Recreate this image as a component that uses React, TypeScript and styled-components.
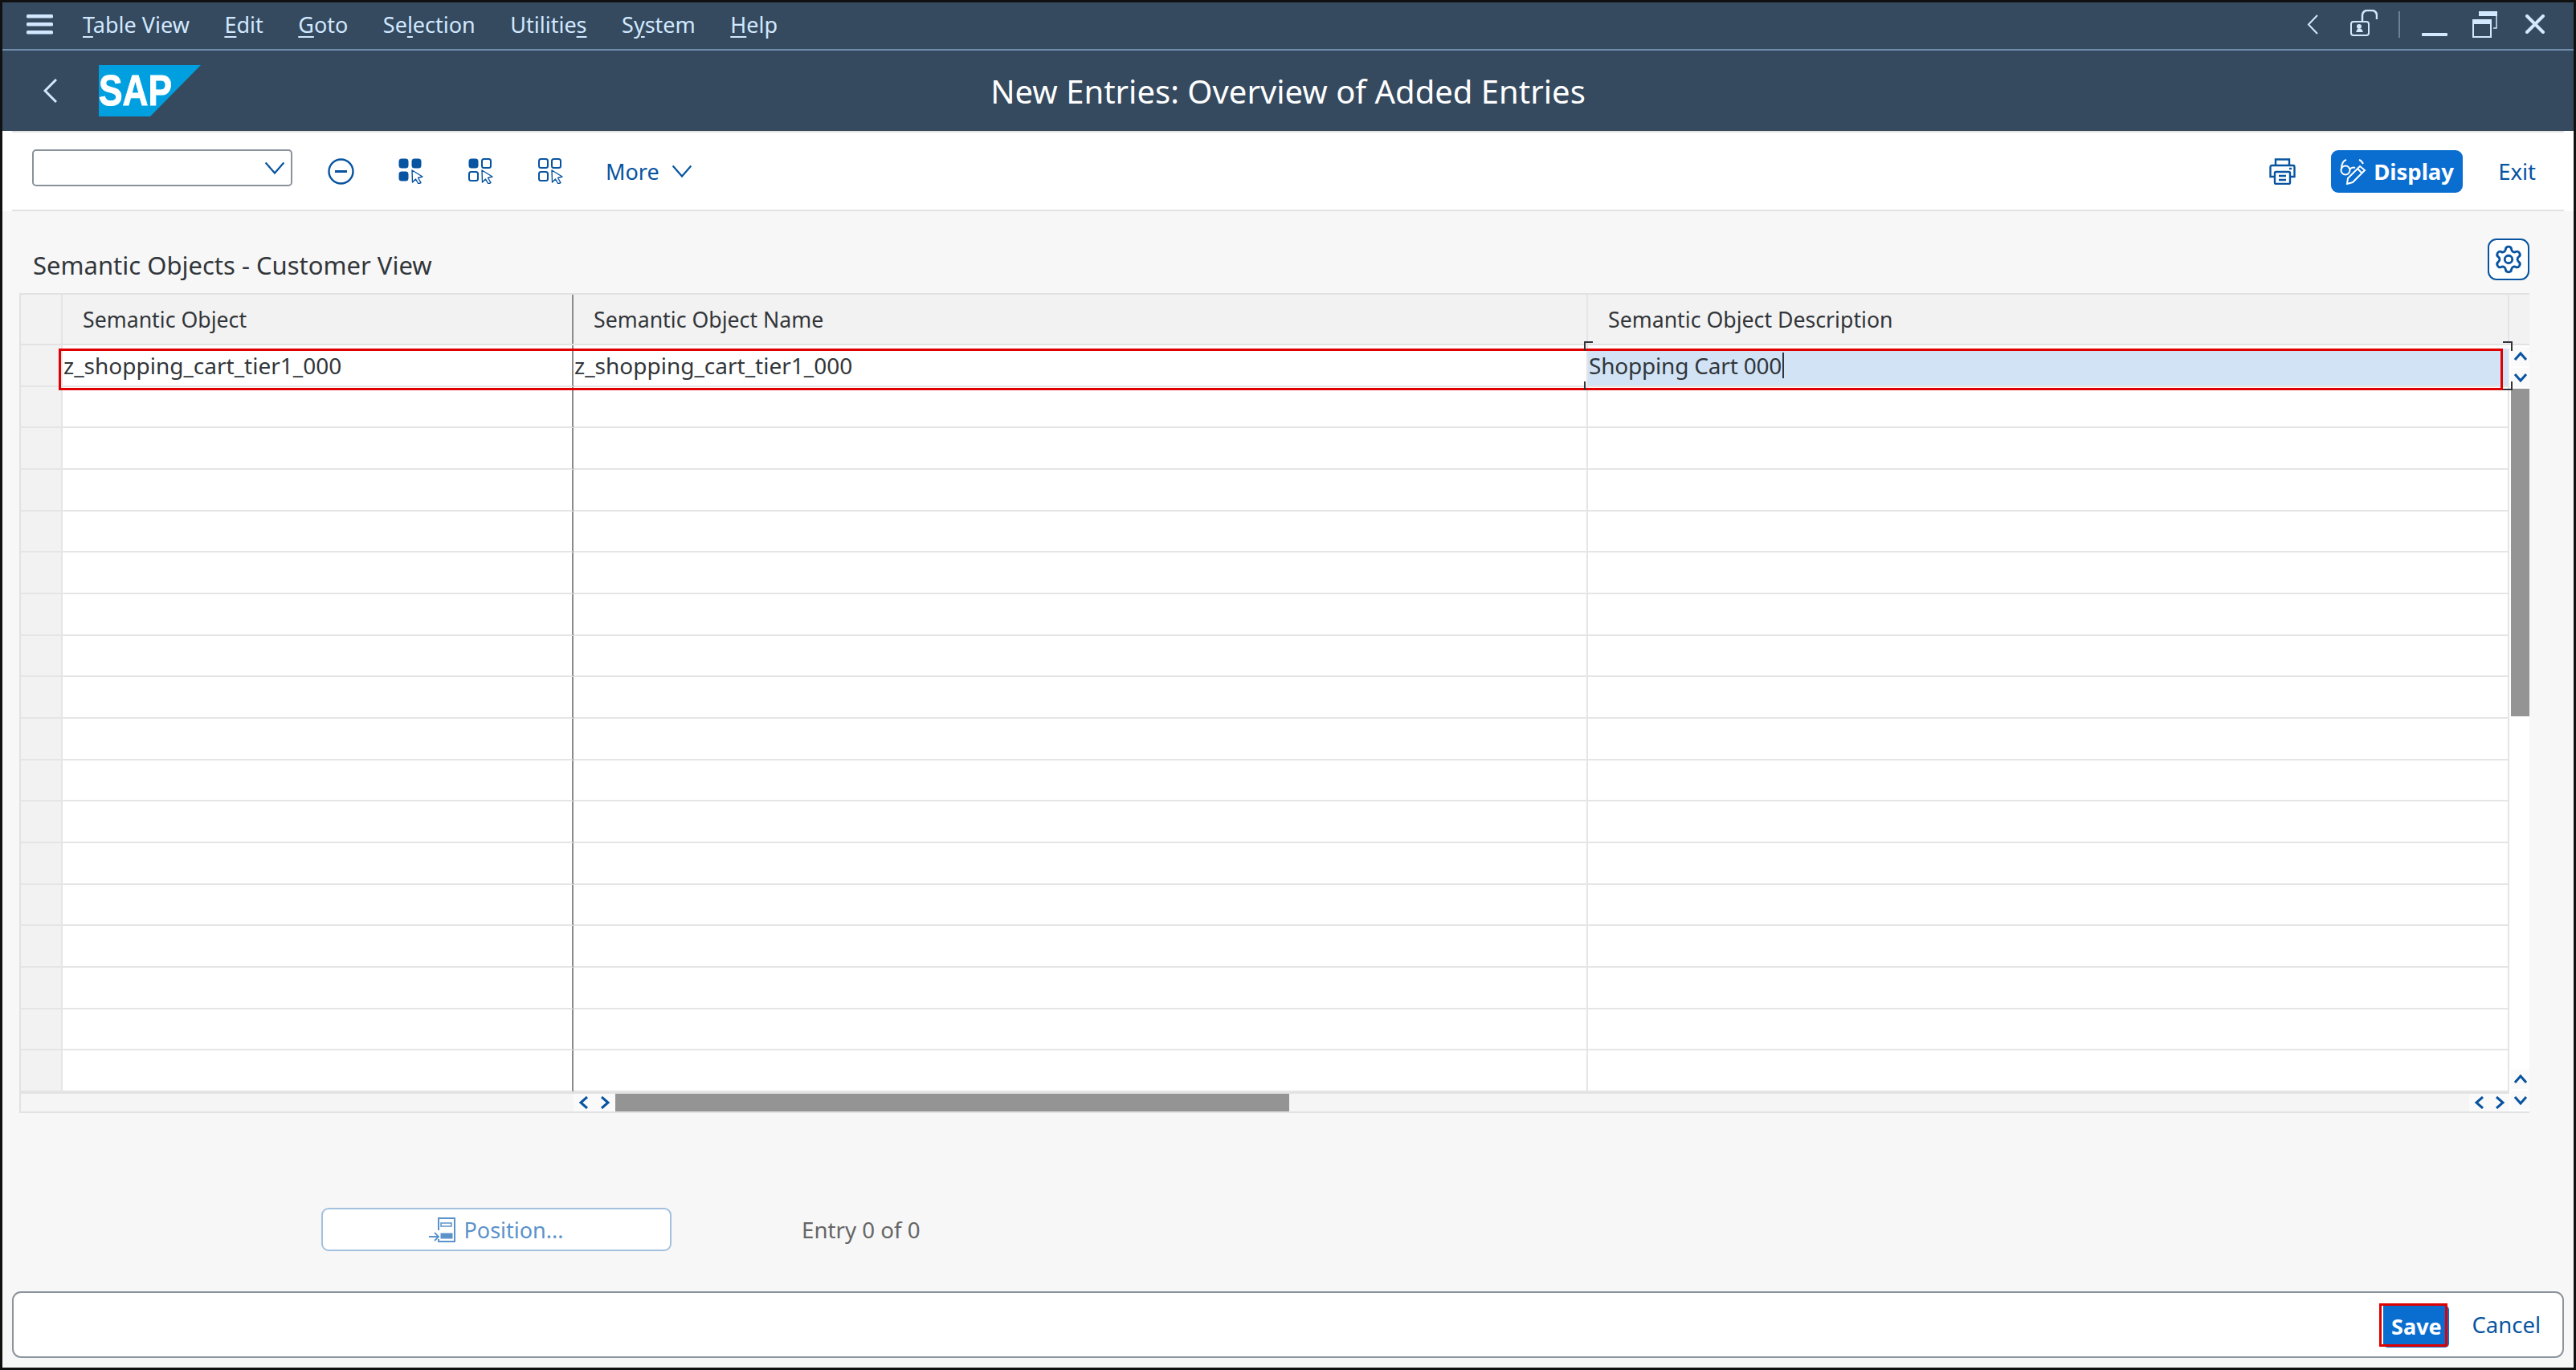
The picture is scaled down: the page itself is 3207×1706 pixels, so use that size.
import styled, { createGlobalStyle } from 'styled-components';
import { Settings } from 'lucide-react';

const GlobalStyle = createGlobalStyle`
  html, body {
    margin: 0;
    padding: 0;
    overflow: hidden;
    background: #000;
  }
  *, *::before, *::after {
    box-sizing: border-box;
  }
`;

const FONT = '"Noto Sans", "Open Sans", Arial, sans-serif';
const ICON_LIGHT = '#d1e8ff';
const ICON_BLUE = '#0854a0';

const Window = styled.div`
  width: 3207px;
  height: 1706px;
  border: 3px solid #111;
  display: flex;
  flex-direction: column;
  font-family: ${FONT};
  color: #32363a;
  background: #f7f7f7;
`;

const MenuBar = styled.div`
  height: 60px;
  flex: none;
  background: #354a5f;
  border-bottom: 2px solid #6f8cad;
  display: flex;
  align-items: center;
  padding: 0 36px 4px 30px;
`;
const MenuList = styled.div`
  display: flex;
  gap: 43.5px;
  margin-left: 37px;
  flex: 1;
`;
const MenuItem = styled.span`
  font-size: 27px;
  color: #d1e8ff;
  white-space: nowrap;
`;
const Mnemonic = styled.span`
  text-decoration: underline;
  text-underline-offset: 4px;
`;
const WindowActions = styled.div`
  display: flex;
  align-items: center;
`;
const ActionSlot = styled.div<{ $after?: number; $lift?: number }>`
  display: flex;
  margin-right: ${(props) => props.$after || 0}px;
  margin-bottom: ${(props) => props.$lift || 0}px;
`;
const ActionDivider = styled.div`
  width: 2px;
  height: 33px;
  background: #6d7f91;
  margin: 0 27px 0 26px;
`;

const TitleBar = styled.div`
  height: 100px;
  flex: none;
  background: #354a5f;
  display: grid;
  grid-template-columns: 1fr auto 1fr;
  align-items: center;
`;
const Brand = styled.div`
  display: flex;
  align-items: center;
  gap: 52px;
  padding-left: 51px;
`;
const PageTitle = styled.h1`
  margin: 0;
  font-size: 40px;
  font-weight: 400;
  color: #fff;
  white-space: nowrap;
`;

const Toolbar = styled.div`
  height: 100px;
  flex: none;
  background: #fff;
  padding: 0 12px;
`;
const ToolbarInner = styled.div`
  height: 100%;
  border-top: 2px solid #e2e2e2;
  border-bottom: 2px solid #e2e2e2;
  display: flex;
  align-items: center;
  justify-content: space-between;
  padding: 0 35px 0 25px;
`;
const ToolGroup = styled.div`
  display: flex;
  align-items: center;
  gap: 55px;
`;
const SelectBox = styled.div`
  width: 324px;
  height: 46px;
  margin: 0 -11px 8px 0;
  border: 2px solid #89919a;
  border-radius: 5px;
  background: #fff;
  display: flex;
  align-items: center;
  justify-content: flex-end;
  padding-right: 7px;
`;
const MoreLink = styled.span`
  display: flex;
  align-items: center;
  gap: 15px;
  font-size: 27px;
  color: ${ICON_BLUE};
  margin-left: -3px;
`;
const PrintSlot = styled.div`
  display: flex;
  margin-right: -11px;
`;
const EmphasizedButton = styled.div`
  width: 164px;
  height: 53px;
  border-radius: 9px;
  background: #0a6ed1;
  color: #fff;
  font-size: 27.5px;
  font-weight: 700;
  display: flex;
  align-items: center;
  gap: 9px;
  padding-left: 11px;
  white-space: nowrap;
`;
const ExitLink = styled.span`
  font-size: 27.5px;
  color: ${ICON_BLUE};
  margin-left: -11px;
`;

const Content = styled.div`
  flex: 1;
  display: flex;
  flex-direction: column;
  padding: 34px 12px 12px;
  min-height: 0;
`;
const SectionHeader = styled.div`
  display: flex;
  justify-content: space-between;
  align-items: flex-start;
  padding: 0 43px 0 26px;
`;
const SectionTitle = styled.h2`
  margin: 0;
  padding-top: 13px;
  font-size: 31px;
  line-height: 40px;
  font-weight: 400;
  color: #32363a;
`;
const GearButton = styled.div`
  width: 52px;
  height: 52px;
  border: 2px solid #0854a0;
  border-radius: 11px;
  background: #fff;
  display: flex;
  align-items: center;
  justify-content: center;
  color: ${ICON_BLUE};
`;

const Table = styled.div`
  width: 3125px;
  height: 1021px;
  margin: 15px 0 0 9px;
  border: 2px solid #e2e2e2;
  display: flex;
  background: #fff;
  flex: none;
`;
const TableMain = styled.div`
  width: 3098px;
  display: flex;
  flex-direction: column;
`;
const HeaderRow = styled.div`
  height: 63px;
  flex: none;
  display: grid;
  grid-template-columns: 52px 636px 1263px 1147px;
  background: #f2f2f2;
  border-bottom: 2px solid #e2e2e2;
`;
const HeaderCell = styled.div<{ $line?: string }>`
  display: flex;
  align-items: center;
  padding-left: 25px;
  font-size: 26.7px;
  color: #32363a;
  white-space: nowrap;
  border-right: 2px solid ${(props) => props.$line || '#e5e5e5'};
`;
const Rows = styled.div`
  position: relative;
  flex: 1;
  display: grid;
  grid-auto-rows: 1fr;
`;
const Row = styled.div`
  display: grid;
  grid-template-columns: 52px 636px 1263px 1147px;
`;
const SelectorCell = styled.div`
  background: #f2f2f2;
  border-right: 2px solid #e5e5e5;
  border-bottom: 2px solid #e5e5e5;
`;
const Cell = styled.div<{ $line?: string; $selected?: boolean }>`
  display: flex;
  align-items: center;
  padding-left: 1px;
  padding-bottom: ${(props) => (props.$selected ? '3px' : '0')};
  font-size: 28px;
  letter-spacing: ${(props) => (props.$selected ? '-0.2px' : '0')};
  color: #32363a;
  white-space: nowrap;
  background: ${(props) => (props.$selected ? '#d1e3f5' : '#fff')};
  margin-top: ${(props) => (props.$selected ? '4px' : '0')};
  border-right: 2px solid ${(props) => props.$line || '#e5e5e5'};
  border-bottom: 2px solid #e5e5e5;
`;
const Caret = styled.span`
  display: inline-block;
  width: 2px;
  height: 32px;
  margin-left: 1px;
  background: #32363a;
`;
const RowHighlight = styled.div`
  position: absolute;
  left: 47px;
  top: 4px;
  width: 3043px;
  height: 52px;
  border: 3px solid #e00000;
  pointer-events: none;
`;
const FocusCorner = styled.div<{ $x: number; $y: number; $w: number; $h: number; $sides: string }>`
  position: absolute;
  left: ${(props) => props.$x}px;
  top: ${(props) => props.$y}px;
  width: ${(props) => props.$w}px;
  height: ${(props) => props.$h}px;
  border-style: solid;
  border-color: #32363a;
  border-width: ${(props) => props.$sides};
`;

const HScrollBar = styled.div`
  height: 24px;
  flex: none;
  display: flex;
  background: #f5f5f5;
  border-top: 2px solid #e2e2e2;
`;
const HScrollLead = styled.div`
  width: 688px;
  flex: none;
`;
const ScrollButton = styled.div<{ $h?: number; $w?: number }>`
  width: ${(props) => (props.$w ? `${props.$w}px` : '100%')};
  height: ${(props) => (props.$h ? `${props.$h}px` : '100%')};
  flex: none;
  background: #fafafa;
  display: flex;
  align-items: center;
  justify-content: center;
`;
const HTrack = styled.div`
  flex: 1;
`;
const HThumb = styled.div`
  width: 839px;
  height: 100%;
  background: #949494;
`;
const VScrollBar = styled.div`
  width: 23px;
  margin-left: 2px;
  flex: none;
  display: flex;
  flex-direction: column;
  background: #fff;
`;
const VScrollHead = styled.div`
  height: 63px;
  flex: none;
  background: #f2f2f2;
  margin-left: -2px;
  border-bottom: 2px solid #e2e2e2;
`;
const VTrack = styled.div`
  flex: 1;
`;
const VThumb = styled.div`
  height: 408px;
  background: #949494;
`;
const VButtonPair = styled.div`
  display: flex;
  flex-direction: column;
  gap: 2px;
  flex: none;
  padding: 2px 0;
`;

const PositionRow = styled.div`
  display: flex;
  align-items: center;
  gap: 162px;
  margin: 118px 0 0 385px;
`;
const PositionButton = styled.div`
  width: 436px;
  height: 54px;
  border: 2px solid #a3c1df;
  border-radius: 9px;
  background: #fff;
  display: flex;
  align-items: center;
  justify-content: center;
  gap: 9px;
  font-size: 27px;
  color: #5b92c9;
`;
const EntryCount = styled.span`
  font-size: 27.7px;
  color: #666;
`;

const StatusBar = styled.div`
  margin-top: auto;
  height: 83px;
  flex: none;
  border: 2px solid #8c949c;
  border-radius: 11px;
  background: #fff;
  display: flex;
  align-items: center;
  justify-content: flex-end;
  gap: 28px;
  padding: 0 27px 0 0;
`;
const SaveButton = styled.div`
  position: relative;
  width: 82px;
  height: 52px;
  margin-top: 4px;
  border-radius: 0 5px 5px 5px;
  background: #0a6ed1;
  color: #fff;
  font-size: 27px;
  font-weight: 700;
  display: flex;
  align-items: center;
  justify-content: center;
  &::after {
    content: '';
    position: absolute;
    left: -5px;
    top: -3px;
    width: 85px;
    height: 54px;
    border: 3px solid #e00000;
  }
`;
const CancelLink = styled.span`
  font-size: 27.5px;
  color: ${ICON_BLUE};
`;

const Chevron = ({ dir, size = 16, width = 3, color = ICON_BLUE }: { dir: 'up' | 'down' | 'left' | 'right'; size?: number; width?: number; color?: string }) => {
  const points = {
    up: '1,12 8,4 15,12',
    down: '1,4 8,12 15,4',
    left: '12,1 4,8 12,15',
    right: '4,1 12,8 4,15'
  }[dir];
  return (
    <svg width={size} height={size} viewBox='0 0 16 16' fill='none'>
      <polyline points={points} stroke={color} strokeWidth={width * (16 / size)} />
    </svg>
  );
};

const Hamburger = () => (
  <svg width='33' height='25' viewBox='0 0 33 25'>
    <rect x='0' y='0' width='33' height='4.5' rx='1.5' fill={ICON_LIGHT} />
    <rect x='0' y='10' width='33' height='4.5' rx='1.5' fill={ICON_LIGHT} />
    <rect x='0' y='20' width='33' height='4.5' rx='1.5' fill={ICON_LIGHT} />
  </svg>
);

const SlimChevron = ({ w, h, sw }: { w: number; h: number; sw: number }) => (
  <svg width={w} height={h} viewBox={`0 0 ${w} ${h}`} fill='none'>
    <polyline points={`${w - 1},1 2,${h / 2} ${w - 1},${h - 1}`} stroke={ICON_LIGHT} strokeWidth={sw} />
  </svg>
);

const LockIcon = () => (
  <svg width='34' height='33' viewBox='0 0 34 33' fill='none'>
    <rect x='1' y='15' width='22' height='17' rx='3' stroke={ICON_LIGHT} strokeWidth='2' />
    <path d='M15 15V7a6 6 0 0 1 6-6h6a6 6 0 0 1 6 6v5' stroke={ICON_LIGHT} strokeWidth='2.5' />
    <circle cx='11' cy='21' r='3' fill={ICON_LIGHT} />
    <path d='M7 28l2-4h5l2 4z' fill={ICON_LIGHT} />
  </svg>
);

const MinimizeIcon = () => (
  <svg width='32' height='33' viewBox='0 0 32 33'>
    <rect x='0' y='29' width='32' height='4' rx='1' fill={ICON_LIGHT} />
  </svg>
);

const RestoreIcon = () => (
  <svg width='31' height='33' viewBox='0 0 31 33' fill='none'>
    <path d='M8 0h23v6H8z' fill={ICON_LIGHT} />
    <path d='M30 6v15h-4' stroke={ICON_LIGHT} strokeWidth='1.5' />
    <rect x='1' y='11' width='22' height='21' stroke={ICON_LIGHT} strokeWidth='2' />
    <rect x='0' y='10' width='24' height='6' fill={ICON_LIGHT} />
  </svg>
);

const CloseIcon = () => (
  <svg width='24' height='24' viewBox='0 0 24 24' fill='none'>
    <path d='M2 2l20 20M22 2L2 22' stroke={ICON_LIGHT} strokeWidth='4' strokeLinecap='round' />
  </svg>
);

const SapLogo = () => (
  <svg width='127' height='64' viewBox='0 0 127 64'>
    <polygon points='0,0 127,0 64,64 0,64' fill='#00a0e0' />
    <text
      x='0'
      y='50'
      fontFamily='"Liberation Sans", Arial, sans-serif'
      fontWeight='700'
      fontSize='53'
      fill='#fff'
      stroke='#fff'
      strokeWidth='1'
      textLength='91'
      lengthAdjust='spacingAndGlyphs'
    >
      SAP
    </text>
  </svg>
);

const MinusCircle = () => (
  <svg width='33' height='33' viewBox='0 0 33 33' fill='none'>
    <circle cx='16.5' cy='16.5' r='15' stroke={ICON_BLUE} strokeWidth='2.4' />
    <rect x='9' y='15' width='15' height='3' fill={ICON_BLUE} />
  </svg>
);

const SelectionIcon = ({ filled }: { filled: boolean[] }) => {
  const tile = (x: number, y: number, on: boolean) => (
    <rect
      x={x}
      y={y}
      width='11'
      height='11'
      rx='2.5'
      fill={on ? ICON_BLUE : 'none'}
      stroke={ICON_BLUE}
      strokeWidth={on ? 1 : 2}
    />
  );
  return (
    <svg width='32' height='32' viewBox='0 0 32 32' fill='none'>
      {tile(1, 1, filled[0])}
      {tile(17, 1, filled[1])}
      {tile(1, 17, filled[2])}
      <path
        d='M17 15l13 8-5.500 1.500 3.500 6-3 1.500-3.500-6-4 4z'
        fill='#fff'
        stroke={ICON_BLUE}
        strokeWidth='1.4'
        strokeLinejoin='round'
      />
    </svg>
  );
};

const PrinterIcon = () => (
  <svg width='33' height='33' viewBox='0 0 33 33' fill='none' stroke={ICON_BLUE} strokeWidth='2.4'>
    <path d='M8 9V1.500h17V9' />
    <path d='M7 23H1.500V11a2 2 0 0 1 2-2h26a2 2 0 0 1 2 2v12H26' />
    <rect x='7' y='17' width='19' height='15' rx='1.500' />
    <path d='M12 22h9M12 27h9' />
    <path d='M25 13h3' />
  </svg>
);

const GlassesPencil = () => (
  <svg width='33' height='33' viewBox='0 0 33 33' fill='none' stroke='#fff' strokeWidth='2'>
    <circle cx='7' cy='15' r='5.500' />
    <path d='M2 14c0-6 2-11 6-12' />
    <path d='M12 14c3-3 5-3 7-2' />
    <path d='M24 2c3 1 4 3 5 5' />
    <path d='M10 25l15-15 6 5-15 15-7 2z' />
    <path d='M22 13l5 5' />
  </svg>
);

const PositionIcon = () => (
  <svg width='34' height='31' viewBox='0 0 34 31' fill='none' stroke='#5b92c9'>
    <path d='M12 16V1h20v29H12v-3' strokeWidth='2' />
    <rect x='15' y='7' width='13' height='4' strokeWidth='1.500' />
    <rect x='15' y='20' width='14' height='6' fill='#5b92c9' strokeWidth='1' />
    <path d='M0 24h12M7 19l5 5-5 5' strokeWidth='1.800' />
  </svg>
);

const EMPTY_ROWS = Array.from({ length: 17 }, (_, i) => i);
const SPLIT_LINE = '#8a8a8a';

const App = () => {
  return (
    <>
      <GlobalStyle />
      <Window>
        <MenuBar>
          <Hamburger />
          <MenuList>
            <MenuItem><Mnemonic>T</Mnemonic>able View</MenuItem>
            <MenuItem><Mnemonic>E</Mnemonic>dit</MenuItem>
            <MenuItem><Mnemonic>G</Mnemonic>oto</MenuItem>
            <MenuItem>Se<Mnemonic>l</Mnemonic>ection</MenuItem>
            <MenuItem>Utilitie<Mnemonic>s</Mnemonic></MenuItem>
            <MenuItem>S<Mnemonic>y</Mnemonic>stem</MenuItem>
            <MenuItem><Mnemonic>H</Mnemonic>elp</MenuItem>
          </MenuList>
          <WindowActions>
            <ActionSlot $after={40}>
              <SlimChevron w={14} h={25} sw={2} />
            </ActionSlot>
            <ActionSlot $lift={4}>
              <LockIcon />
            </ActionSlot>
            <ActionDivider />
            <ActionSlot $after={31} $lift={4}>
              <MinimizeIcon />
            </ActionSlot>
            <ActionSlot $after={35}>
              <RestoreIcon />
            </ActionSlot>
            <CloseIcon />
          </WindowActions>
        </MenuBar>

        <TitleBar>
          <Brand>
            <SlimChevron w={17} h={30} sw={3} />
            <SapLogo />
          </Brand>
          <PageTitle>New Entries: Overview of Added Entries</PageTitle>
          <span />
        </TitleBar>

        <Toolbar>
          <ToolbarInner>
            <ToolGroup>
              <SelectBox>
                <Chevron dir='down' size={26} width={2.2} />
              </SelectBox>
              <MinusCircle />
              <SelectionIcon filled={[true, true, true]} />
              <SelectionIcon filled={[true, false, false]} />
              <SelectionIcon filled={[false, false, false]} />
              <MoreLink>
                More
                <Chevron dir='down' size={26} width={2.2} />
              </MoreLink>
            </ToolGroup>
            <ToolGroup>
              <PrintSlot>
                <PrinterIcon />
              </PrintSlot>
              <EmphasizedButton>
                <GlassesPencil />
                Display
              </EmphasizedButton>
              <ExitLink>Exit</ExitLink>
            </ToolGroup>
          </ToolbarInner>
        </Toolbar>

        <Content>
          <SectionHeader>
            <SectionTitle>Semantic Objects - Customer View</SectionTitle>
            <GearButton>
              <Settings size={38} strokeWidth={1.8} />
            </GearButton>
          </SectionHeader>

          <Table>
            <TableMain>
              <HeaderRow>
                <HeaderCell />
                <HeaderCell $line={SPLIT_LINE}>Semantic Object</HeaderCell>
                <HeaderCell>Semantic Object Name</HeaderCell>
                <HeaderCell>Semantic Object Description</HeaderCell>
              </HeaderRow>
              <Rows>
                <Row>
                  <SelectorCell />
                  <Cell $line={SPLIT_LINE}>z_shopping_cart_tier1_000</Cell>
                  <Cell>z_shopping_cart_tier1_000</Cell>
                  <Cell $selected>
                    Shopping Cart 000
                    <Caret />
                  </Cell>
                </Row>
                {EMPTY_ROWS.map((i) => (
                  <Row key={i}>
                    <SelectorCell />
                    <Cell $line={SPLIT_LINE} />
                    <Cell />
                    <Cell />
                  </Row>
                ))}
                <RowHighlight />
                <FocusCorner $x={1946} $y={-5} $w={11} $h={12} $sides='2px 0 0 2px' />
                <FocusCorner $x={1946} $y={45} $w={2} $h={11} $sides='0 0 0 2px' />
                <FocusCorner $x={3090} $y={-5} $w={12} $h={12} $sides='2px 2px 0 0' />
                <FocusCorner $x={3090} $y={45} $w={12} $h={11} $sides='0 2px 2px 0' />
              </Rows>
              <HScrollBar>
                <HScrollLead />
                <ScrollButton $w={26}>
                  <Chevron dir='left' size={16} />
                </ScrollButton>
                <ScrollButton $w={26}>
                  <Chevron dir='right' size={16} />
                </ScrollButton>
                <HTrack>
                  <HThumb />
                </HTrack>
                <ScrollButton $w={25}>
                  <Chevron dir='left' size={16} />
                </ScrollButton>
                <ScrollButton $w={25}>
                  <Chevron dir='right' size={16} />
                </ScrollButton>
              </HScrollBar>
            </TableMain>
            <VScrollBar>
              <VScrollHead />
              <VButtonPair>
                <ScrollButton $h={24}>
                  <Chevron dir='up' size={16} />
                </ScrollButton>
                <ScrollButton $h={24}>
                  <Chevron dir='down' size={16} />
                </ScrollButton>
              </VButtonPair>
              <VTrack>
                <VThumb />
              </VTrack>
              <VButtonPair>
                <ScrollButton $h={24}>
                  <Chevron dir='up' size={16} />
                </ScrollButton>
                <ScrollButton $h={24}>
                  <Chevron dir='down' size={16} />
                </ScrollButton>
              </VButtonPair>
            </VScrollBar>
          </Table>

          <PositionRow>
            <PositionButton>
              <PositionIcon />
              Position...
            </PositionButton>
            <EntryCount>Entry 0 of 0</EntryCount>
          </PositionRow>

          <StatusBar>
            <SaveButton>Save</SaveButton>
            <CancelLink>Cancel</CancelLink>
          </StatusBar>
        </Content>
      </Window>
    </>
  );
};

export default App;
